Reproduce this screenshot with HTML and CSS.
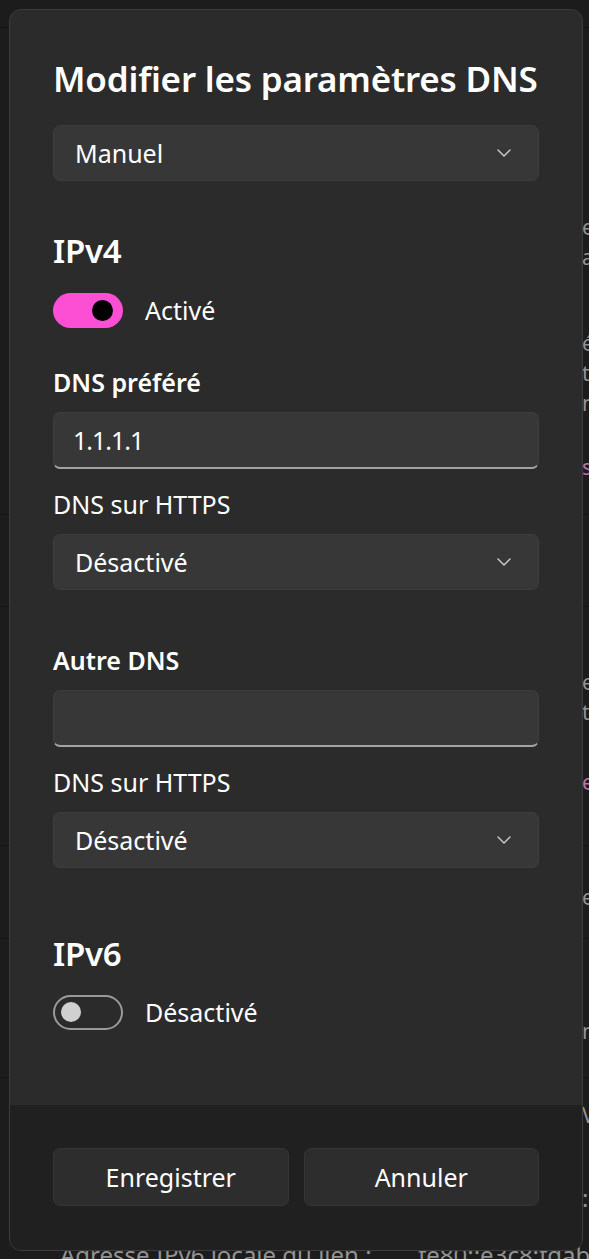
FILE: index.html
```html
<!DOCTYPE html>
<html lang="fr">
<head>
<meta charset="utf-8">
<title>Modifier les paramètres DNS</title>
<link rel="stylesheet" href="styles.css">
</head>
<body>
<div class="page">
  <div class="group g0"></div>
  <div class="group g1">
    <div class="bgrow r1"><span class="val">eau privé</span></div>
    <div class="bgrow"><span class="val">ajouté</span></div>
    <div class="bgrow r2"><span class="val">éseau</span></div>
    <div class="bgrow"><span class="val">tilisé</span></div>
    <div class="bgrow"><span class="val">non</span></div>
    <div class="bgrow r3"><span class="val link">s paramètres</span></div>
  </div>
  <div class="group g2"></div>
  <div class="group g3">
    <div class="bgrow r4"><span class="val">e automatique</span></div>
    <div class="bgrow"><span class="val">tique</span></div>
    <div class="bgrow r5"><span class="val link">e modifier</span></div>
  </div>
  <div class="group g4">
    <div class="bgrow r6"><span class="val">e</span></div>
  </div>
  <div class="group g5">
    <div class="bgrow r7"><span class="val">n</span></div>
  </div>
  <div class="group g6">
    <div class="bgrow r8"><span class="val">V</span></div>
    <div class="bgrow r9"><span class="val">:</span></div>
    <div class="bgrow r10"><span class="lbl">Adresse IPv6 locale du lien :</span><span class="val2">fe80::e3c8:fdab</span></div>
  </div>
</div>

<div class="dialog" role="dialog" aria-label="Modifier les paramètres DNS">
  <div class="body">
    <h1 class="title">Modifier les paramètres DNS</h1>
    <div class="select first"><span>Manuel</span><svg class="chev" viewBox="0 0 14 8" width="14" height="8"><path d="M1 1l6 6 6-6"/></svg></div>

    <h2 class="section">IPv4</h2>
    <div class="toggle-row">
      <span class="toggle on"><span class="knob"></span></span>
      <span class="toggle-label">Activé</span>
    </div>

    <div class="label strong l1">DNS préféré</div>
    <div class="input">1.1.1.1</div>
    <div class="label">DNS sur HTTPS</div>
    <div class="select"><span>Désactivé</span><svg class="chev" viewBox="0 0 14 8" width="14" height="8"><path d="M1 1l6 6 6-6"/></svg></div>

    <div class="label strong l2">Autre DNS</div>
    <div class="input"></div>
    <div class="label">DNS sur HTTPS</div>
    <div class="select"><span>Désactivé</span><svg class="chev" viewBox="0 0 14 8" width="14" height="8"><path d="M1 1l6 6 6-6"/></svg></div>

    <h2 class="section s2">IPv6</h2>
    <div class="toggle-row r-off">
      <span class="toggle off"><span class="knob"></span></span>
      <span class="toggle-label">Désactivé</span>
    </div>
  </div>
  <div class="footer">
    <button class="btn">Enregistrer</button>
    <button class="btn">Annuler</button>
  </div>
</div>
</body>
</html>
```

FILE: styles.css
```css
* { box-sizing: border-box; }
html, body {
  margin: 0;
  padding: 0;
  width: 589px;
  height: 1259px;
  overflow: hidden;
  background: #1c1c1c;
  font-family: "Noto Sans", "Open Sans", sans-serif;
  color: #ffffff;
}

/* background settings page */
.page {
  width: 589px;
  height: 1259px;
  display: flex;
  flex-direction: column;
  overflow: hidden;
}
.group { border-bottom: 1px solid #141414; overflow: hidden; }
.g0 { height: 28px; flex: none; }
.g1 { height: 487px; flex: none; padding-top: 186px; }
.g2 { height: 92px; flex: none; }
.g3 { height: 239px; flex: none; padding-top: 60px; }
.g4 { height: 93px; flex: none; padding-top: 36px; }
.g5 { height: 139px; flex: none; padding-top: 77px; }
.g6 { flex: 1; border-bottom: 0; padding-top: 22px; overflow: visible; }
.bgrow {
  height: 30px;
  line-height: 30px;
  font-size: 21px;
  color: #939393;
  white-space: nowrap;
  display: flex;
  overflow: hidden;
  flex: none;
}
.bgrow .val { margin-left: 582px; }
.bgrow.r1 { margin-top: -2px; }
.bgrow.r2 { margin-top: 56px; }
.bgrow.r3 { margin-top: 34px; }
.bgrow.r5 { margin-top: 40px; }
.bgrow.r9 { margin-top: 50px; height: 36px; line-height: 36px; font-size: 24px; }
.bgrow.r10 { margin-top: 24px; font-size: 24px; }
.bgrow .lbl { margin-left: 60px; width: 358px; flex: none; }
.bgrow .val2 { margin-left: 0; }
.link { color: #b776ad; }

/* dialog overlay */
.dialog {
  position: absolute;
  left: 9px;
  top: 9px;
  width: 574px;
  height: 1242px;
  background: #2b2b2b;
  border: 1px solid #3c3c3c;
  border-radius: 12px;
  overflow: hidden;
  display: flex;
  flex-direction: column;
}
.body {
  flex: 1;
  padding: 49px 43px 0 43px;
  display: flex;
  flex-direction: column;
}
.title {
  margin: 0;
  font-size: 35px;
  font-weight: 600;
  line-height: 40px;
  letter-spacing: -0.2px;
  white-space: nowrap;
}
.select {
  height: 56px;
  margin-top: 15px;
  background: #373737;
  border: 1px solid #3d3d3d;
  border-radius: 7px;
  display: flex;
  align-items: center;
  justify-content: space-between;
  padding: 0 27px 0 21px;
  font-size: 25px;
  color: #ffffff;
}
.select.first { margin-top: 26px; }
.chev { fill: none; stroke: #d0d0d0; stroke-width: 1.4; stroke-linecap: round; stroke-linejoin: round; }

.section {
  margin: 50px 0 0 0;
  font-size: 33px;
  font-weight: 600;
  line-height: 40px;
  letter-spacing: -0.3px;
}
.section.s2 { margin-top: 66px; }

.toggle-row {
  margin-top: 21px;
  height: 36px;
  display: flex;
  align-items: center;
  gap: 22px;
}
.toggle-row.r-off { margin-top: 20px; }
.toggle {
  width: 70px;
  height: 35px;
  border-radius: 18px;
  display: flex;
  align-items: center;
  flex: none;
}
.toggle.on {
  background: #fc4fd4;
  justify-content: flex-end;
  padding-right: 10px;
}
.toggle.on .knob { width: 21px; height: 21px; border-radius: 50%; background: #000; }
.toggle.off {
  border: 2px solid #9a9a9a;
  padding-left: 6px;
}
.toggle.off .knob { width: 20px; height: 20px; border-radius: 50%; background: #d0d0d0; }
.toggle-label { font-size: 25px; line-height: 30px; }

.label {
  margin-top: 20px;
  font-size: 25px;
  line-height: 30px;
}
.label.strong { font-weight: 600; }
.label.l1 { margin-top: 39px; }
.label.l2 { margin-top: 55px; }

.input {
  margin-top: 15px;
  height: 57px;
  background: #373737;
  border: 1px solid #3d3d3d;
  border-bottom: 2px solid #a3a3a3;
  border-radius: 7px;
  display: flex;
  align-items: center;
  padding: 0 19px;
  font-size: 25px;
  letter-spacing: -1px;
}

.footer {
  height: 145px;
  background: #202020;
  padding: 43px 43px 0 43px;
  display: flex;
  gap: 15px;
}
.btn {
  flex: 1;
  height: 58px;
  background: #2d2d2d;
  border: 1px solid #353535;
  border-radius: 7px;
  color: #ffffff;
  font-family: inherit;
  font-size: 25px;
}
```
